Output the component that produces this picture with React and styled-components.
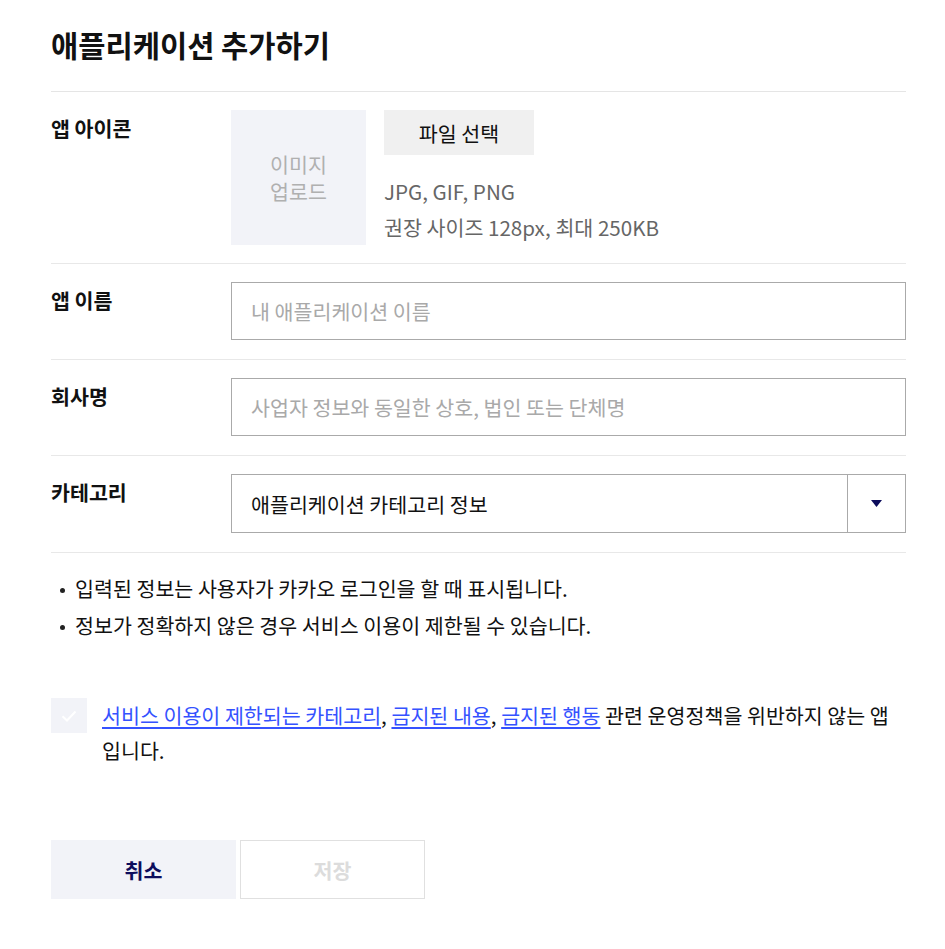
import React from "react";
import styled, { createGlobalStyle } from "styled-components";

const Global = createGlobalStyle`
  html, body { margin: 0; padding: 0; background: #fff; }
  body {
    font-family: "Noto Sans CJK KR", "Noto Sans", sans-serif;
    color: #111;
    -webkit-font-smoothing: antialiased;
    word-break: keep-all;
  }
  * { box-sizing: border-box; }
`;

const FS = "20.6px";

const Page = styled.div`
  width: 855px;
  margin-left: 51px;
  padding-top: 24px;
  padding-bottom: 49px;
`;

const Title = styled.h1`
  margin: 0;
  font-size: 29.6px;
  line-height: 42px;
  font-weight: 700;
  padding-bottom: 25px;
  border-bottom: 1px solid #e5e5e5;
`;

const Row = styled.div`
  display: flex;
  align-items: flex-start;
  padding: 18px 0 ${(p) => (p.$tight ? 18 : 19)}px;
  border-bottom: 1px solid #e8e8e8;
`;

const Label = styled.div`
  width: 180px;
  flex: none;
  font-size: ${FS};
  font-weight: 700;
  line-height: 36px;
`;

const Field = styled.div`
  flex: 1;
  display: flex;
  min-width: 0;
`;

const ImageBox = styled.div`
  width: 135px;
  height: 135px;
  background: #f2f3f8;
  color: #b0b0b0;
  font-size: ${FS};
  line-height: 27px;
  display: flex;
  align-items: center;
  justify-content: center;
  text-align: center;
`;

const IconInfo = styled.div`
  margin-left: 18px;
  display: flex;
  flex-direction: column;
  align-items: flex-start;
`;

const FileButton = styled.button`
  width: 150px;
  height: 45px;
  border: 0;
  background: #f0f0f0;
  font-family: inherit;
  font-size: ${FS};
  color: #111;
  padding: 0;
  cursor: pointer;
`;

const Hint = styled.div`
  font-size: ${FS};
  color: #666;
  line-height: 36px;
  margin-top: ${(p) => p.$top || 0}px;
`;

const TextInput = styled.input`
  width: 100%;
  height: 58px;
  border: 1px solid #aaa;
  padding: 0 19px;
  font-family: inherit;
  font-size: ${FS};
  color: #111;
  outline: none;
  &::placeholder { color: #a9a9a9; }
`;

const Select = styled.div`
  width: 100%;
  height: 59px;
  border: 1px solid #aaa;
  display: flex;
  align-items: stretch;
`;

const SelectValue = styled.div`
  flex: 1;
  display: flex;
  align-items: center;
  padding: 0 19px;
  font-size: ${FS};
  color: #111;
`;

const SelectArrow = styled.div`
  width: 58px;
  border-left: 1px solid #aaa;
  display: flex;
  align-items: center;
  justify-content: center;
`;

const Notes = styled.ul`
  margin: 0;
  padding: 17px 0 0 0;
  list-style: none;
`;

const Note = styled.li`
  position: relative;
  padding-left: 24px;
  font-size: ${FS};
  line-height: 37px;
  color: #111;
  &::before {
    content: "";
    position: absolute;
    left: 9px;
    top: 18px;
    width: 5px;
    height: 5px;
    border-radius: 50%;
    background: #222;
  }
`;

const Agree = styled.label`
  display: flex;
  align-items: flex-start;
  margin-top: 54px;
`;

const CheckBox = styled.span`
  width: 36px;
  height: 35px;
  flex: none;
  background: #f2f3f8;
  display: flex;
  align-items: center;
  justify-content: center;
`;

const AgreeText = styled.div`
  margin-left: 15px;
  font-size: ${FS};
  line-height: 35px;
  color: #111;
`;

const Link = styled.a`
  color: #3552ff;
  text-decoration: underline;
  text-underline-offset: 3px;
`;

const Buttons = styled.div`
  display: flex;
  gap: 4px;
  margin-top: 72px;
`;

const Btn = styled.button`
  width: 185px;
  height: 59px;
  font-family: inherit;
  font-size: ${FS};
  font-weight: 700;
  padding: 0;
  background: ${(p) => (p.$primary ? "#f2f3f8" : "#fff")};
  color: ${(p) => (p.$primary ? "#0d0d5c" : "#dcdcdc")};
  border: ${(p) => (p.$primary ? "0" : "1px solid #e0e0e0")};
`;

export default function App() {
  return (
    <>
      <Global />
      <Page>
        <Title>애플리케이션 추가하기</Title>
        <Row $tight>
          <Label>앱 아이콘</Label>
          <Field>
            <ImageBox>
              이미지
              <br />
              업로드
            </ImageBox>
            <IconInfo>
              <FileButton>파일 선택</FileButton>
              <Hint $top={18}>JPG, GIF, PNG</Hint>
              <Hint>권장 사이즈 128px, 최대 250KB</Hint>
            </IconInfo>
          </Field>
        </Row>
        <Row>
          <Label>앱 이름</Label>
          <Field>
            <TextInput placeholder="내 애플리케이션 이름" />
          </Field>
        </Row>
        <Row>
          <Label>회사명</Label>
          <Field>
            <TextInput placeholder="사업자 정보와 동일한 상호, 법인 또는 단체명" />
          </Field>
        </Row>
        <Row>
          <Label>카테고리</Label>
          <Field>
            <Select>
              <SelectValue>애플리케이션 카테고리 정보</SelectValue>
              <SelectArrow>
                <svg width="11" height="7" viewBox="0 0 11 7">
                  <path d="M0 0 H11 L5.5 7 Z" fill="#0d0d5c" />
                </svg>
              </SelectArrow>
            </Select>
          </Field>
        </Row>
        <Notes>
          <Note>입력된 정보는 사용자가 카카오 로그인을 할 때 표시됩니다.</Note>
          <Note>정보가 정확하지 않은 경우 서비스 이용이 제한될 수 있습니다.</Note>
        </Notes>
        <Agree>
          <CheckBox>
            <svg width="16" height="12" viewBox="0 0 16 12">
              <path d="M1.5 6.2 L6 10.5 L14.5 1.5" fill="none" stroke="#fff" strokeWidth="2" />
            </svg>
          </CheckBox>
          <AgreeText>
            <Link href="#">서비스 이용이 제한되는 카테고리</Link>,{" "}
            <Link href="#">금지된 내용</Link>, <Link href="#">금지된 행동</Link> 관련
            운영정책을 위반하지 않는 앱 입니다.
          </AgreeText>
        </Agree>
        <Buttons>
          <Btn $primary>취소</Btn>
          <Btn>저장</Btn>
        </Buttons>
      </Page>
    </>
  );
}
